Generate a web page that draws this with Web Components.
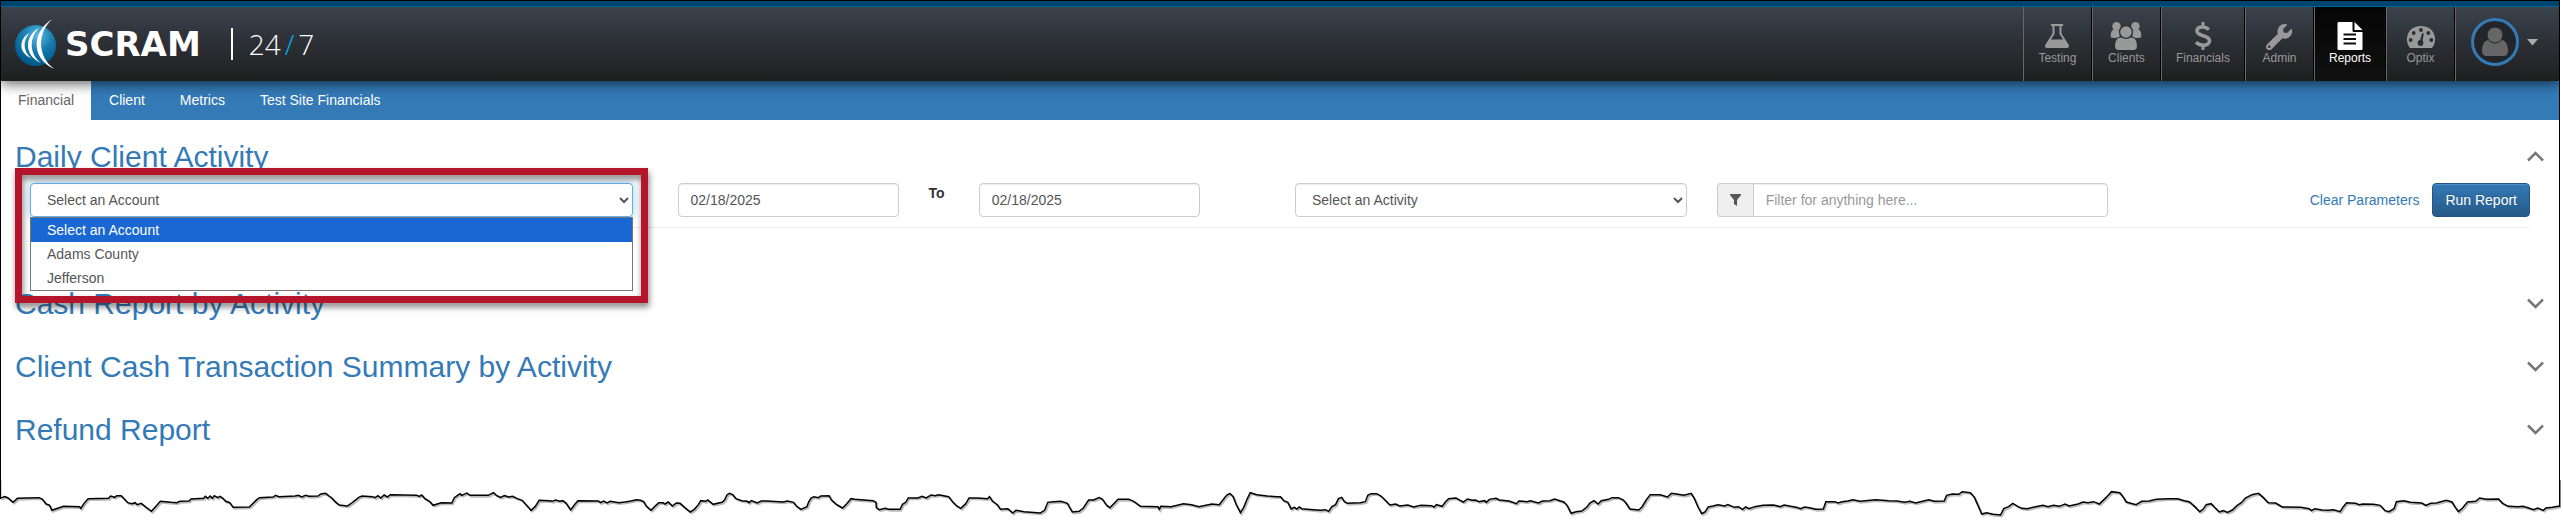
<!DOCTYPE html>
<html lang="en">
<head>
<meta charset="utf-8">
<title>SCRAM 24/7 - Reports</title>
<style>
  body { margin: 0; background: #fff; color: #333; font: 14px/20px 'Liberation Sans', Arial, sans-serif; }
</style>
</head>
<body>
<app-frame>
  <app-header>
    <nav-item icon="flask">Testing</nav-item>
    <nav-item icon="users">Clients</nav-item>
    <nav-item icon="dollar">Financials</nav-item>
    <nav-item icon="wrench">Admin</nav-item>
    <nav-item icon="file" active>Reports</nav-item>
    <nav-item icon="gauge">Optix</nav-item>
    <user-menu></user-menu>
  </app-header>
  <sub-nav>
    <sub-tab active>Financial</sub-tab>
    <sub-tab>Client</sub-tab>
    <sub-tab>Metrics</sub-tab>
    <sub-tab>Test Site Financials</sub-tab>
  </sub-nav>
  <report-panel heading="Daily Client Activity" open>
    <report-filters></report-filters>
  </report-panel>
  <report-panel heading="Cash Report by Activity"></report-panel>
  <report-panel heading="Client Cash Transaction Summary by Activity"></report-panel>
  <report-panel heading="Refund Report"></report-panel>
</app-frame>
<torn-edge></torn-edge>

<script>
(function () {
  const DARK = '#2a2d31';

  // nav icons, all on a 32x30 grid
  const ICONS = {
    flask: '<path fill-rule="evenodd" d="M10.5 3h11c1 0 1 2 0 2h-1v7.5l7 11c1.3 2 0 3.5-2 3.5h-19c-2 0-3.3-1.5-2-3.5l7-11V5h-1c-1 0-1-2 0-2zM13.5 5v8l-3.6 5.5h12.2L18.5 13V5z"/>',
    users: `<circle cx="6.5" cy="5.3" r="4.2"/><circle cx="25.500" cy="5.3" r="4.2"/>
      <path d="M3.5 8.5C1 9.5.7 12.5.7 16c1 1.2 3 1.2 9 1V9.5zM28.5 8.5c2.5 1 2.8 4 2.8 7.5-1 1.2-3 1.2-9 1V9.5z"/>
      <path stroke="${DARK}" stroke-width="1.2" d="M10 16c-4 .5-5.5 4-5.5 9.5 0 2.500 1.500 4 4 4h15c2.500 0 4-1.500 4-4 0-5.500-1.500-9-5.500-9.500z"/>
      <circle cx="16" cy="11" r="6.4" stroke="${DARK}" stroke-width="1.2"/>`,
    dollar: `<path fill="none" stroke="currentColor" stroke-width="3.6" d="M22 8.5C20 6.8 18 6 15.5 6c-3.5 0-5.5 1.6-5.5 4 0 6 12.5 3.6 12.5 9.8 0 2.6-2.5 4.4-6 4.4-3 0-5.5-1-7.5-3"/>
      <path d="M14.5 1h3v5h-3zM14.5 24h3v5h-3z"/>`,
    wrench: '<path transform="translate(3 3) scale(.051)" d="M507.730 109.100c-2.240-9.030-13.540-12.090-20.120-5.510l-74.360 74.360-67.880-11.310-11.310-67.880 74.360-74.360c6.620-6.620 3.430-17.900-5.660-20.160-47.380-11.740-99.550.910-136.580 37.930-39.640 39.640-50.550 97.100-34.050 147.200L18.740 402.760c-24.990 24.990-24.990 65.510 0 90.500 24.990 24.990 65.510 24.990 90.500 0l213.210-213.210c50.120 16.710 107.470 5.680 147.370-34.220 37.070-37.070 49.700-89.320 37.910-136.730zM64 472c-13.250 0-24-10.750-24-24 0-13.260 10.750-24 24-24s24 10.750 24 24c0 13.250-10.750 24-24 24z"/>',
    file: `<path d="M5 1h13.5v8.500c0 1 .5 1.500 1.500 1.500h8.500v16.500c0 1-.5 1.500-1.500 1.500H5c-1 0-1.500-.5-1.500-1.500v-25C3.500 1.500 4 1 5 1zM20.500 1l8 8h-8z"/>
      <path fill="#0c0c0c" d="M9.500 12.500h12.500v2H9.500zM9.500 17h12.500v2H9.500zM9.500 21.500h12.500v2H9.500z"/>`,
    gauge: `<path d="M5 27C-1 20 1.500 5 16 5s17 15 11 22z"/>
      <g fill="${DARK}"><circle cx="5.700" cy="19" r="1.900"/><circle cx="8.700" cy="12" r="1.900"/><circle cx="16" cy="9" r="1.900"/>
      <circle cx="23.300" cy="12" r="1.900"/><circle cx="26.300" cy="19" r="1.900"/><circle cx="15.500" cy="22" r="2.900"/>
      <path d="M14.500 21l2.700-9 1.600.400-1.600 9.600z"/></g>`,
  };

  // outline of the torn paper, one row per quarter of the width (1568 units each)
  const TEAR = [
    [0,55, 10,50, 18,53, 31,67, 42,55, 95,53, 103,58, 112,72, 120,75, 126,91, 148,82, 155,79, 194,80, 197,85, 205,70, 215,56, 265,55, 270,48, 280,52, 285,47, 296,47, 312,68, 322,71, 330,68, 335,74, 345,70, 357,82, 370,94, 380,80, 392,64, 418,67, 432,68, 440,64, 462,63, 467,57, 498,55, 502,49, 508,55, 514,48, 519,55, 524,47, 532,53, 538,49, 545,55, 552,64, 562,68, 570,82, 610,81, 628,59, 635,53, 668,51, 674,46, 682,50, 722,48, 730,46, 738,51, 748,46, 756,49, 778,48, 785,42, 797,40, 805,48, 812,54, 820,65, 830,75, 850,78, 862,68, 878,52, 886,48, 912,50, 918,53, 925,47, 932,54, 940,45, 948,51, 955,44, 1020,46, 1026,49, 1032,45, 1040,56, 1052,65, 1060,76, 1080,68, 1106,69, 1112,53, 1120,46, 1126,41, 1130,46, 1143,39, 1150,46, 1195,46, 1208,38, 1215,46, 1225,52, 1235,47, 1245,51, 1255,49, 1265,55, 1278,61, 1290,77, 1300,91, 1310,80, 1320,61, 1345,62, 1352,64, 1360,60, 1370,64, 1378,62, 1386,70, 1397,90, 1408,72, 1415,62, 1465,63, 1470,68, 1478,63, 1486,69, 1494,64, 1515,68, 1530,66, 1545,63, 1558,59],
    [0,61, 8,65, 14,78, 26,91, 38,76, 45,68, 55,68, 60,72, 68,66, 78,78, 88,69, 97,70, 108,82, 122,96, 132,88, 142,74, 148,62, 160,64, 165,60, 178,73, 200,67, 206,60, 212,45, 218,40, 226,44, 234,56, 248,62, 262,64, 266,68, 272,62, 286,69, 296,63, 310,63, 350,66, 360,63, 375,67, 382,78, 393,88, 408,80, 412,66, 418,54, 425,50, 436,53, 442,48, 462,47, 468,60, 480,73, 495,84, 505,72, 516,56, 525,58, 570,62, 577,67, 578,83, 585,89, 600,85, 608,88, 636,88, 642,73, 650,67, 656,54, 680,54, 690,49, 700,54, 712,45, 722,47, 730,44, 755,50, 765,66, 775,78, 785,85, 797,71, 805,54, 826,54, 850,56, 855,50, 862,63, 875,75, 882,88, 900,86, 912,99, 920,91, 940,95, 980,99, 990,91, 998,67, 1012,65, 1030,64, 1046,70, 1052,84, 1058,96, 1075,94, 1085,84, 1098,60, 1110,60, 1124,53, 1132,58, 1142,76, 1150,83, 1162,68, 1170,58, 1196,58, 1205,62, 1212,67, 1225,79, 1268,80, 1271,88, 1275,79, 1300,80, 1330,71, 1350,74, 1368,80, 1400,72, 1418,74, 1427,60, 1436,46, 1444,40, 1452,50, 1460,75, 1470,98, 1478,82, 1486,58, 1494,38, 1510,44, 1535,48, 1560,50],
    [0,50, 8,62, 18,67, 26,87, 34,82, 40,87, 46,81, 52,86, 80,89, 98,91, 110,89, 118,94, 126,80, 135,74, 142,56, 150,52, 156,64, 164,70, 196,68, 208,65, 214,46, 222,41, 236,41, 246,48, 256,60, 268,75, 282,72, 292,78, 312,75, 326,81, 344,76, 370,77, 376,81, 382,74, 396,79, 404,66, 412,56, 430,54, 440,61, 448,66, 458,57, 470,61, 478,60, 486,65, 500,62, 504,67, 512,58, 528,55, 536,60, 560,63, 578,71, 584,63, 604,65, 612,62, 632,69, 642,63, 660,62, 672,57, 684,62, 694,66, 702,76, 712,100, 724,95, 738,93, 750,82, 758,69, 768,62, 778,72, 786,62, 804,58, 812,53, 828,53, 840,60, 848,72, 856,87, 878,90, 886,80, 896,60, 906,44, 930,44, 948,51, 958,40, 974,43, 988,46, 998,43, 1006,40, 1014,56, 1024,84, 1032,101, 1040,96, 1048,81, 1060,78, 1072,74, 1088,78, 1096,74, 1112,82, 1122,80, 1132,88, 1140,81, 1148,86, 1162,80, 1182,76, 1208,75, 1224,80, 1234,75, 1250,79, 1264,82, 1274,86, 1284,81, 1296,83, 1312,88, 1330,87, 1336,65, 1358,65, 1366,69, 1376,65, 1390,63, 1402,59, 1420,64, 1458,59, 1490,62, 1510,63, 1530,67, 1542,64, 1556,69],
    [0,65, 20,59, 34,64, 58,63, 64,46, 78,42, 94,43, 102,35, 122,38, 132,52, 142,80, 150,102, 162,98, 178,103, 196,105, 204,86, 216,80, 226,70, 238,79, 248,85, 262,86, 282,80, 300,76, 312,80, 326,76, 340,79, 354,72, 364,78, 386,72, 398,66, 410,68, 424,65, 438,72, 450,58, 460,46, 468,35, 488,38, 496,50, 504,66, 528,74, 542,64, 560,63, 578,58, 608,56, 630,56, 646,62, 658,65, 672,80, 684,95, 692,88, 700,74, 712,71, 722,84, 732,96, 742,92, 752,97, 764,90, 776,76, 786,68, 796,54, 812,44, 828,40, 840,53, 852,68, 870,69, 886,81, 932,82, 952,86, 958,92, 966,86, 984,90, 1000,91, 1012,89, 1028,95, 1036,80, 1044,68, 1066,70, 1074,74, 1084,72, 1110,73, 1126,76, 1138,92, 1148,95, 1160,86, 1166,65, 1184,62, 1200,67, 1228,69, 1238,76, 1250,70, 1264,69, 1288,61, 1302,66, 1310,82, 1318,95, 1328,84, 1340,66, 1360,64, 1370,54, 1386,58, 1416,57, 1426,70, 1440,79, 1464,80, 1476,79, 1490,84, 1502,89, 1512,84, 1526,91, 1532,84, 1548,82, 1566,78],
  ];

  function define(name, html, setup) {
    const tpl = document.createElement('template');
    tpl.innerHTML = html;
    customElements.define(name, class extends HTMLElement {
      connectedCallback() {
        if (this.shadowRoot) return;
        const root = this.attachShadow({ mode: 'open' });
        root.appendChild(tpl.content.cloneNode(true));
        if (setup) setup(this, root);
      }
    });
  }

  define('app-frame', `
    <style>
      :host { display: block; margin-right: 3px; border: 1px solid #000; border-bottom: 0; padding-bottom: 24px; }
    </style>
    <slot></slot>`);

  define('app-header', `
    <style>
      :host { display: block; position: relative; z-index: 1; border-top: 5px solid #00456f; box-shadow: 0 3px 12px rgba(0,0,0,.6);
              clip-path: inset(0 0 -20px 0); }
      header { display: flex; justify-content: space-between; height: 74px; border-top: 1px solid #00629b;
               background: linear-gradient(#3a424c, #1e1e1e); }
      .brand { display: flex; align-items: center; padding-left: 14px; color: #fff; text-decoration: none; }
      .mark { width: 42px; height: 52px; margin-right: 8px; }
      .name { font: bold 34px/40px 'DejaVu Sans', sans-serif; }
      .num { display: flex; gap: 4px; margin-left: 30px; padding-left: 16px; border-left: 2px solid #fff;
             font: 300 28px/32px 'Open Sans', sans-serif; }
      .num i { font-style: normal; color: #00aeef; }
      nav { display: flex; }
    </style>
    <header>
      <a class="brand" href="#">
        <svg class="mark" viewBox="0 0 42 52" aria-hidden="true">
          <defs><radialGradient id="g" cx=".55" cy=".25" r=".7">
            <stop offset="0" stop-color="#5cbbe4"/><stop offset=".5" stop-color="#1a7fb0"/><stop offset="1" stop-color="#005a8c"/>
          </radialGradient></defs>
          <circle cx="20.500" cy="27.500" r="20.500" fill="url(#g)"/>
          <g fill="#fff">
            <path d="M37.500 1C16 14 16 41 39.500 51 22 39 22 14 37.500 1z"/>
            <path d="M24.500 9.500C9 18 9 38 26 45 14 36 14 19 24.500 9.500z"/>
            <path d="M14.500 15C3.500 21 3.500 35 16 40 8 33 7.500 23 14.500 15z"/>
          </g>
        </svg>
        <span class="name">SCRAM</span>
        <span class="num"><span>24</span><i>/</i><span>7</span></span>
      </a>
      <nav><slot></slot></nav>
    </header>`);

  define('nav-item', `
    <style>
      :host { display: block; }
      a { display: flex; flex-direction: column; align-items: center; box-sizing: border-box; height: 100%; min-width: 69px;
          padding: 14px 14px 0; border-left: 1px solid #686868; border-right: 1px solid #000;
          color: #999; font-size: 12px; line-height: 14px; text-decoration: none; }
      svg { width: 32px; height: 30px; fill: currentColor; }
      :host([active]) a { background: linear-gradient(#050505, #111); color: #fff; }
    </style>
    <a href="#"><svg viewBox="0 0 32 30" aria-hidden="true"></svg><slot></slot></a>`,
    (host, root) => { root.querySelector('svg').innerHTML = ICONS[host.getAttribute('icon')]; });

  define('user-menu', `
    <style>
      :host { display: block; }
      button { display: flex; align-items: center; gap: 8px; height: 100%; padding: 0 21px 4px 15px; border: 0; border-left: 1px solid #686868;
               background: none; color: #aaa; }
      .pic { width: 48px; height: 48px; }
    </style>
    <button type="button" aria-label="Account menu">
      <svg class="pic" viewBox="0 0 48 48" aria-hidden="true">
        <circle cx="24" cy="24" r="22.500" fill="#222529" stroke="#337ab7" stroke-width="3"/>
        <path fill="#666" d="M17 22c-4 1-6 5-6 11 0 3 2 5 5 5h16c3 0 5-2 5-5 0-6-2-10-6-11z"/>
        <circle cx="24" cy="17" r="8" fill="#666" stroke="#222529"/>
      </svg>
      <svg width="11" height="7" viewBox="0 0 11 7" aria-hidden="true"><path fill="currentColor" d="M0 0h11L5.500 6.500z"/></svg>
    </button>`);

  define('sub-nav', `
    <style>
      :host { display: flex; gap: 1px; height: 39px; background: #337ab7; }
    </style>
    <slot></slot>`);

  define('sub-tab', `
    <style>
      :host { display: block; }
      a { display: block; padding: 9px 17px 10px; color: #fff; text-decoration: none; }
      :host([active]) a { background: #fff; color: #666; }
    </style>
    <a href="#"><slot></slot></a>`);

  define('report-panel', `
    <style>
      :host { display: block; padding: 20px 15px 10px 14px; }
      :host([open]) { padding-bottom: 39px; }
      .head { display: flex; justify-content: space-between; align-items: center; }
      h2 { margin: 0; font-size: 30px; line-height: 33px; font-weight: normal; color: #337ab7; }
      button { display: flex; padding: 0; border: 0; background: none; color: #777; }
      svg { width: 17px; height: 11px; }
      :host([open]) svg { transform: rotate(180deg); }
    </style>
    <div class="head">
      <h2></h2>
      <button type="button" aria-label="Toggle report"><svg viewBox="0 0 17 11"><path d="M1 1.500l7.500 7.500L16 1.500" fill="none" stroke="currentColor" stroke-width="2.500"/></svg></button>
    </div>
    <slot></slot>`,
    (host, root) => {
      root.querySelector('h2').textContent = host.getAttribute('heading');
      root.querySelector('button').addEventListener('click', () => host.toggleAttribute('open'));
    });

  define('report-filters', `
    <style>
      :host { display: block; padding: 10px 14px 0 15px; }
      form { display: grid; grid-template-columns: 3fr 3fr 2fr 2fr 2fr; margin: 0 -15px; }
      form > div { padding: 0 15px; min-width: 0; }
      .rule { height: 1px; margin-top: 10px; background: #eee; }
      input, select { box-sizing: border-box; width: 100%; height: 34px; padding: 6px 12px; border: 1px solid #ccc; border-radius: 4px;
                      background: #fff; color: #555; font: inherit; box-shadow: inset 0 1px 1px rgba(0,0,0,.075); display: block; }
      input::placeholder { color: #999; }
      .dates { display: grid; grid-template-columns: 5fr 1fr 5fr 1fr; }
      .dates > * { padding: 0 15px; }
      label { font-weight: bold; }
      .group { display: flex; }
      .group span { display: flex; align-items: center; padding: 0 12px; border: 1px solid #ccc; border-right: 0; border-radius: 4px 0 0 4px;
                    background: #eee; color: #555; }
      .group input { border-radius: 0 4px 4px 0; }
      .actions { display: flex; justify-content: flex-end; align-items: center; gap: 13px; }
      a { color: #337ab7; text-decoration: none; }
      .run { height: 34px; padding: 0 12px; border: 1px solid #245580; border-radius: 4px; color: #fff; font: inherit;
             background: linear-gradient(#337ab7, #265a88); text-shadow: 0 -1px 0 rgba(0,0,0,.2); box-shadow: inset 0 1px 0 rgba(255,255,255,.15); }
      .account { position: relative; }
      .account select { border-color: #66afe9; box-shadow: 0 0 8px rgba(102,175,233,.6); }
      ul { position: absolute; top: 34px; left: 15px; right: 15px; z-index: 1; margin: 0; padding: 0; list-style: none;
           border: 1px solid #767676; background: #fff; color: #555; }
      li { padding: 2px 16px; }
      li[aria-selected=true] { background: #1967d2; color: #fff; }
      .callout { position: absolute; inset: -15px 0 auto 0; z-index: 2; box-sizing: border-box; height: 135px; border: 7px solid #b5152b;
                 filter: drop-shadow(1px 4px 3px rgba(0,0,0,.5)); pointer-events: none; }
    </style>
    <form>
      <div class="account">
        <select aria-label="Account"><option>Select an Account</option><option>Adams County</option><option>Jefferson</option></select>
        <ul role="listbox" aria-label="Accounts">
          <li role="option" aria-selected="true">Select an Account</li>
          <li role="option">Adams County</li>
          <li role="option">Jefferson</li>
        </ul>
        <div class="callout"></div>
      </div>
      <div class="dates">
        <div><input type="text" value="02/18/2025" aria-label="From"></div>
        <label for="to">To</label>
        <div><input type="text" id="to" value="02/18/2025"></div>
      </div>
      <div><select aria-label="Activity"><option>Select an Activity</option></select></div>
      <div class="group">
        <span><svg width="11" height="12" viewBox="0 0 11 12" aria-hidden="true"><path fill="currentColor" d="M0 0h11v1L7 6v6L4 10V6L0 1z"/></svg></span>
        <input type="text" placeholder="Filter for anything here..." aria-label="Filter">
      </div>
      <div class="actions"><a href="#">Clear Parameters</a><button class="run" type="button">Run Report</button></div>
    </form>
    <div class="rule"></div>`);

  define('torn-edge', `
    <style>
      :host { display: block; }
      svg { display: block; width: 100%; height: 45px; }
      path { fill: none; vector-effect: non-scaling-stroke; }
    </style>
    <svg viewBox="0 0 6279 135" preserveAspectRatio="none" aria-hidden="true">
      <path class="shade" stroke="#bbb" stroke-width="2" transform="translate(3 4)"/>
      <path class="line" stroke="#000" stroke-width="1.500"/>
    </svg>`,
    (host, root) => {
      const pts = [];
      TEAR.forEach((row, q) => {
        for (let i = 0; i < row.length; i += 2) pts.push((q * 1568 + row[i] + 1) + ' ' + row[i + 1]);
      });
      const d = 'L' + pts.join('L');
      root.querySelector('.shade').setAttribute('d', 'M' + d.slice(1));
      root.querySelector('.line').setAttribute('d', 'M1 0' + d + 'L6271 78V0');
    });
})();
</script>
</body>
</html>
